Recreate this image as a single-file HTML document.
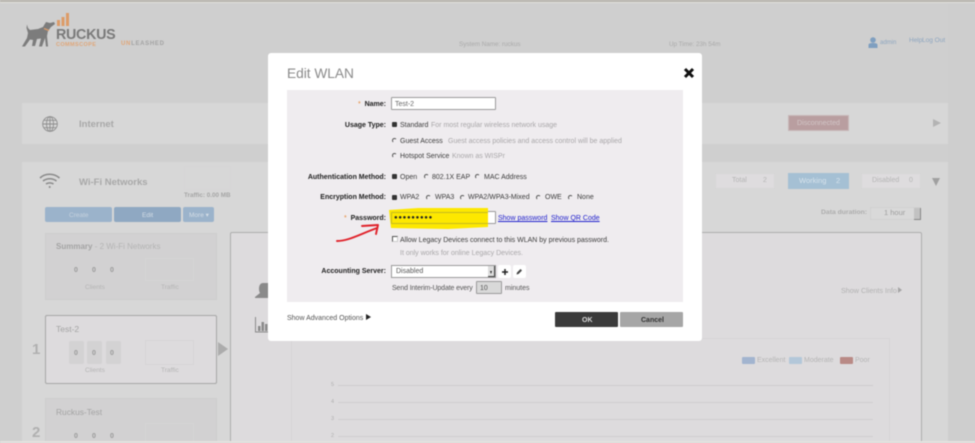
<!DOCTYPE html>
<html><head><meta charset="utf-8"><style>
html,body{margin:0;padding:0;width:975px;height:443px;overflow:hidden;background:#cfcfcf}
body{position:relative;font-family:"Liberation Sans",sans-serif;font-size:7px;color:#333}
#w{position:absolute;left:0;top:0;width:975px;height:443px;overflow:hidden;filter:blur(.45px)}
.a{position:absolute}
.t{position:absolute;white-space:nowrap;line-height:10px}
.m{color:#3c3c3c;font-size:7px}
.b{font-weight:bold;color:#222;font-size:7px;text-align:right;width:120px;left:266px}
.g{color:#a9a7a9;font-size:7px}
.l{color:#aaa;font-size:7px}
.r{position:absolute;width:5px;height:5px;border-radius:50%;border:1px solid transparent;border-left-color:#555;border-top-color:#555;box-sizing:border-box}
.r.on{background:#333;border:0;border-radius:1px;width:5px;height:5px}
.card{position:absolute;left:45px;width:172px;box-sizing:border-box;background:#d2d1d2;border:1px solid #cdcdcd}
.n{position:absolute;font-size:7px;font-weight:bold;color:#9a9a9a;line-height:10px}
.box{position:absolute;border:1px solid #d6d5d6;box-sizing:border-box}
.s{position:absolute;height:16px;background:#dedcde;border:1px solid #d6d6d6;box-sizing:border-box}
</style></head><body><div id="w">
<div class="a" style="left:0;top:0;width:975px;height:2px;background:#b8b5ae"></div>
<div class="a" style="left:0;top:2px;width:975px;height:1px;background:#e2e1de"></div>

<!-- Header -->
<svg class="a" style="left:20px;top:12px" width="145" height="40" viewBox="20 12 145 40">
<path d="M22 46.500 L25 46.500 L30 39.500 L33 40 L32 46 L35 46 L37 39 L41 38.500 L39 46.500 L42 46.500 L45 38 L46 46.500 L48 46.500 L47 36 L48 31 L51 27 L55 24 L54 22 L50 23 L46 22 L43 27 L38 29 L30 30 L28 28 L27 24.500 L26.500 28 L28 33 L27 38 Z" fill="#7c7c7c"/>
<path d="M44 28.500 L49 30.500" stroke="#d89b6c" stroke-width="1.400"/>
<rect x="57" y="20" width="3" height="6" fill="#dd9c68"/>
<rect x="61.500" y="17" width="3" height="9" fill="#dd9c68"/>
<rect x="66" y="13" width="3" height="13" fill="#dd9c68"/>
</svg>
<div class="t" style="left:56px;top:28px;font-size:14.300px;font-weight:bold;color:#7a7a7a;line-height:15px;letter-spacing:-.3px">RUCKUS</div>
<div class="t" style="left:56px;top:41px;font-size:5.500px;font-weight:bold;color:#e0a678;line-height:8px;letter-spacing:.4px">COMMSCOPE</div>
<div class="t" style="left:121px;top:40px;font-size:6px;font-weight:bold;color:#a3a3a3;line-height:9px;letter-spacing:.7px"><span style="color:#e0a678">UN</span>LEASHED</div>
<div class="t l" style="left:459px;top:40px;font-size:6.300px;color:#aaa">System Name: ruckus</div>
<div class="t l" style="left:669px;top:40px;font-size:6.300px;color:#aaa">Up Time: 23h 54m</div>
<svg class="a" style="left:868px;top:37px" width="10" height="11" viewBox="0 0 10 11"><circle cx="5" cy="3" r="2.800" fill="#7f9fc0"/><path d="M0.500 11 V8 C.5 6.500 2 6 5 6 C8 6 9.500 6.500 9.500 8 V11Z" fill="#7f9fc0"/></svg>
<div class="t" style="left:880px;top:38px;font-size:6px;color:#8ea6c0">admin</div>
<div class="t" style="left:909px;top:36px;font-size:6.500px;color:#8ea6c0">Help</div>
<div class="t" style="left:922px;top:36px;font-size:6.500px;color:#8ea6c0">Log Out</div>

<!-- side column -->
<div class="a" style="left:948px;top:3px;width:27px;height:440px;background:#cecece"></div>

<!-- Internet panel -->
<div class="a" style="left:22px;top:103px;width:926px;height:41px;background:#d7d7d7"></div>
<svg class="a" style="left:42px;top:116px" width="16" height="16" viewBox="0 0 16 16" fill="none" stroke="#8d8d8d" stroke-width=".9"><circle cx="8" cy="8" r="7.300"/><ellipse cx="8" cy="8" rx="3.500" ry="7.300"/><path d="M8 .7V15.300M.7 8H15.300M1.800 4.300H14.200M1.800 11.700H14.200"/></svg>
<div class="t" style="left:79px;top:120px;font-size:9.500px;font-weight:bold;color:#a8a8a8">Internet</div>
<div class="a" style="left:788px;top:115px;width:61px;height:16px;background:#b99ea0;border:1px solid #c8b8b9;box-sizing:border-box"></div>
<div class="t" style="left:797px;top:118px;font-size:7.100px;color:#d2c6c7">Disconnected</div>
<div class="a" style="left:933px;top:119px;width:0;height:0;border-left:8px solid #b3b3b3;border-top:4px solid transparent;border-bottom:4px solid transparent"></div>

<!-- WiFi panel -->
<div class="a" style="left:22px;top:162px;width:926px;height:281px;background:#d7d7d7"></div>
<svg class="a" style="left:39px;top:172px" width="22" height="17" viewBox="0 0 22 17" fill="none" stroke="#8a8a8a" stroke-width="1.600"><path d="M1 6 C6 1 15 1 20.500 6"/><path d="M4 9 C8 6 13.500 6 17.500 9"/><path d="M7 12 C9 10.500 12.500 10.500 14.500 12"/><circle cx="10.700" cy="15" r="1" fill="#8a8a8a" stroke="none"/></svg>
<div class="t" style="left:79px;top:178px;font-size:9.500px;font-weight:bold;color:#a8a8a8">Wi-Fi Networks</div>
<div class="box" style="left:184px;top:166px;width:47px;height:24px"></div>
<div class="t" style="left:184px;top:191px;font-size:6.300px;font-weight:bold;color:#a6a6a6">Traffic: 0.00 MB</div>
<div class="a" style="left:45px;top:207px;width:67px;height:15px;background:#9bb3cb;border-radius:2px"></div>
<div class="a" style="left:114px;top:207px;width:67px;height:15px;background:#8fa8c2;border-radius:2px"></div>
<div class="a" style="left:183px;top:207px;width:31px;height:15px;background:#9bb3cb;border-radius:2px"></div>
<div class="t" style="left:69px;top:211px;font-size:6.500px;color:#c6d2de">Create</div>
<div class="t" style="left:142px;top:211px;font-size:6.500px;color:#d4dde6">Edit</div>
<div class="t" style="left:189px;top:211px;font-size:6.500px;color:#d4dde6">More ▾</div>

<div class="s" style="left:715px;top:173px;width:60px"></div>
<div class="t" style="left:732px;top:176px;color:#b5b5b5;font-size:7px">Total</div>
<div class="t" style="left:763px;top:176px;color:#b5b5b5;font-size:7px">2</div>
<div class="a" style="left:788px;top:173px;width:61px;height:16px;background:#a5c0d4"></div>
<div class="t" style="left:799px;top:176px;color:#d7e3ec;font-size:7.500px">Working</div>
<div class="t" style="left:836px;top:176px;color:#d7e3ec;font-size:7.500px">2</div>
<div class="s" style="left:861px;top:173px;width:60px"></div>
<div class="t" style="left:872px;top:176px;color:#b5b5b5;font-size:7px">Disabled</div>
<div class="t" style="left:909px;top:176px;color:#b5b5b5;font-size:7px">0</div>
<div class="a" style="left:932px;top:178px;width:0;height:0;border-top:8px solid #a0a0a0;border-left:4.500px solid transparent;border-right:4.500px solid transparent"></div>
<div class="t" style="left:821px;top:208px;font-size:6.800px;font-weight:bold;color:#adadad">Data duration:</div>
<div class="a" style="left:870px;top:207px;width:51px;height:13px;border:1px solid #d0d0d0;box-sizing:border-box;background:#d9d9d9"></div>
<div class="t" style="left:884px;top:207px;font-size:7.500px;color:#9e9e9e;line-height:12px">1 hour</div>
<div class="a" style="left:914px;top:208px;width:7px;height:12px;background:#c2c2c2;border-right:1px solid #888;border-bottom:1px solid #888;box-sizing:border-box"></div>

<!-- cards -->
<div class="card" style="top:233px;height:67px"></div>
<div class="t" style="left:56px;top:242px;font-size:8px;color:#b4b4b4"><b style="color:#a4a4a4">Summary</b> - 2 Wi-Fi Networks</div>
<div class="n" style="left:74px;top:266px">0</div><div class="n" style="left:92px;top:266px">0</div><div class="n" style="left:110px;top:266px">0</div>
<div class="box" style="left:145px;top:258px;width:49px;height:23px"></div>
<div class="t" style="left:85px;top:283px;font-size:6.500px;color:#b5b5b5">Clients</div>
<div class="t" style="left:161px;top:283px;font-size:6.500px;color:#b5b5b5">Traffic</div>

<div class="a" style="left:45px;top:315px;width:172px;height:69px;box-sizing:border-box;background:#dddbdd;border:1px solid #a6a6a6;border-radius:2px"></div>
<div class="t" style="left:56px;top:324px;font-size:8.500px;color:#a4a4a4">Test-2</div>
<div class="a" style="left:69px;top:341px;width:15px;height:23px;background:#d3d2d3;border-radius:2px"></div>
<div class="a" style="left:87px;top:341px;width:15px;height:23px;background:#d3d2d3;border-radius:2px"></div>
<div class="a" style="left:106px;top:341px;width:15px;height:23px;background:#d3d2d3;border-radius:2px"></div>
<div class="n" style="left:74px;top:349px">0</div><div class="n" style="left:92px;top:349px">0</div><div class="n" style="left:110px;top:349px">0</div>
<div class="box" style="left:145px;top:340px;width:49px;height:25px"></div>
<div class="t" style="left:85px;top:366px;font-size:6.500px;color:#b5b5b5">Clients</div>
<div class="t" style="left:161px;top:366px;font-size:6.500px;color:#b5b5b5">Traffic</div>
<div class="t" style="left:32px;top:342px;font-size:15px;font-weight:bold;color:#b0b0b0;line-height:15px">1</div>
<div class="a" style="left:218px;top:342px;width:0;height:0;border-left:10px solid #acacac;border-top:7.500px solid transparent;border-bottom:7.500px solid transparent"></div>

<div class="card" style="top:398px;height:60px"></div>
<div class="t" style="left:56px;top:407px;font-size:8.400px;color:#a4a4a4">Ruckus-Test</div>
<div class="n" style="left:74px;top:432px">0</div><div class="n" style="left:92px;top:432px">0</div><div class="n" style="left:110px;top:432px">0</div>
<div class="box" style="left:145px;top:423px;width:49px;height:30px"></div>
<div class="t" style="left:32px;top:425px;font-size:15px;font-weight:bold;color:#b0b0b0;line-height:15px">2</div>

<!-- Right detail panel -->
<div class="a" style="left:230px;top:232px;width:692px;height:220px;box-sizing:border-box;background:#dddbdd;border:1.500px solid #aeaeae;border-radius:2px"></div>
<svg class="a" style="left:254px;top:280px" width="20" height="55" viewBox="0 0 20 55"><path d="M1 17 L6 13 C4 9 5 3 9 3 H14 V18 H1Z" fill="#8a8a8a"/><path d="M1.500 37 V52 H14" stroke="#8a8a8a" fill="none"/><rect x="4" y="46" width="2.500" height="5" fill="#8a8a8a"/><rect x="7.500" y="42" width="2.500" height="9" fill="#8a8a8a"/><rect x="11" y="44" width="2.500" height="7" fill="#8a8a8a"/></svg>
<div class="t" style="left:841px;top:286px;font-size:7.200px;color:#b2b2b2">Show Clients Info</div>
<div class="a" style="left:898px;top:287px;width:0;height:0;border-left:4px solid #a5a5a5;border-top:3.500px solid transparent;border-bottom:3.500px solid transparent"></div>
<div class="a" style="left:291px;top:338px;width:599px;height:110px;box-sizing:border-box;border:1px solid #d7d5d7"></div>
<div class="a" style="left:742px;top:357px;width:13px;height:7px;background:#a2b4cf;border-radius:1px"></div>
<div class="t" style="left:757px;top:356px;font-size:7px;color:#b5b5b5">Excellent</div>
<div class="a" style="left:789px;top:357px;width:13px;height:7px;background:#b3c7d9;border-radius:1px"></div>
<div class="t" style="left:804px;top:356px;font-size:7px;color:#b5b5b5">Moderate</div>
<div class="a" style="left:840px;top:357px;width:13px;height:7px;background:#b98a86;border-radius:1px"></div>
<div class="t" style="left:855px;top:356px;font-size:7px;color:#b5b5b5">Poor</div>
<div class="a" style="left:338px;top:385px;width:535px;height:1px;background:#cdcbcd"></div>
<div class="a" style="left:338px;top:402px;width:535px;height:1px;background:#d0ced0"></div>
<div class="a" style="left:338px;top:419px;width:535px;height:1px;background:#d0ced0"></div>
<div class="a" style="left:338px;top:436px;width:535px;height:1px;background:#d0ced0"></div>
<div class="t" style="left:331px;top:380px;font-size:5.500px;color:#b0b0b0">5</div>
<div class="t" style="left:331px;top:397px;font-size:5.500px;color:#b0b0b0">4</div>
<div class="t" style="left:331px;top:414px;font-size:5.500px;color:#b0b0b0">3</div>
<div class="t" style="left:331px;top:431px;font-size:5.500px;color:#b0b0b0">2</div>

<div class="a" style="left:0;top:441px;width:975px;height:2px;background:#e4e3df"></div>

<!-- Modal -->
<div class="a" style="left:268px;top:53px;width:434px;height:288px;background:#fff;border-radius:3px"></div>
<div class="t" style="left:287px;top:66px;font-size:13.700px;color:#8a8a8a;line-height:16px">Edit WLAN</div>
<svg class="a" style="left:683px;top:67px" width="12" height="12" viewBox="0 0 12 12"><path d="M2 2 L10 10 M10 2 L2 10" stroke="#111" stroke-width="3"/></svg>
<div class="a" style="left:287px;top:90px;width:396px;height:212px;background:#efecef"></div>

<div class="t" style="left:358px;top:100px;font-size:7px;color:#e58a3c">*</div>
<div class="t b" style="top:100px">Name:</div>
<div class="a" style="left:391px;top:97px;width:105px;height:13px;background:#fff;border:1px solid #9a9a9a;box-sizing:border-box;border-radius:1px"></div>
<div class="t" style="left:395px;top:100px;font-size:7px;color:#666">Test-2</div>

<div class="t b" style="top:121px">Usage Type:</div>
<div class="r on" style="left:392px;top:122px"></div>
<div class="t m" style="left:400px;top:121px">Standard</div>
<div class="t g" style="left:431px;top:121px">For most regular wireless network usage</div>
<div class="r" style="left:392px;top:138px"></div>
<div class="t m" style="left:400px;top:137px">Guest Access</div>
<div class="t g" style="left:448px;top:137px">Guest access policies and access control will be applied</div>
<div class="r" style="left:392px;top:153px"></div>
<div class="t m" style="left:400px;top:152px">Hotspot Service</div>
<div class="t g" style="left:452px;top:152px">Known as WISPr</div>

<div class="t b" style="top:173px">Authentication Method:</div>
<div class="r on" style="left:392px;top:174px"></div>
<div class="t m" style="left:400px;top:173px">Open</div>
<div class="r" style="left:424px;top:174px"></div>
<div class="t m" style="left:432px;top:173px">802.1X EAP</div>
<div class="r" style="left:475px;top:174px"></div>
<div class="t m" style="left:484px;top:173px">MAC Address</div>

<div class="t b" style="top:193px">Encryption Method:</div>
<div class="r on" style="left:392px;top:195px"></div>
<div class="t m" style="left:400px;top:193px">WPA2</div>
<div class="r" style="left:426px;top:195px"></div>
<div class="t m" style="left:435px;top:193px">WPA3</div>
<div class="r" style="left:460px;top:195px"></div>
<div class="t m" style="left:468px;top:193px">WPA2/WPA3-Mixed</div>
<div class="r" style="left:536px;top:195px"></div>
<div class="t m" style="left:545px;top:193px">OWE</div>
<div class="r" style="left:568px;top:195px"></div>
<div class="t m" style="left:577px;top:193px">None</div>

<div class="t" style="left:344px;top:214px;font-size:7px;color:#e58a3c">*</div>
<div class="t b" style="top:214px">Password:</div>
<div class="a" style="left:391px;top:211px;width:105px;height:13px;background:#fff;border:1px solid #9a9a9a;box-sizing:border-box;border-radius:1px"></div>
<svg class="a" style="left:388px;top:207px" width="101" height="23" viewBox="0 0 101 23"><path d="M1 3 L30 1 L100 1 L100 20 L60 22 L3 21 Z" fill="#fde800"/></svg>
<div class="a" style="left:391px;top:212px;width:97px;height:12px;box-sizing:border-box;border:1px solid #c4ba20;border-right:0;border-radius:1px"></div>
<div class="t" style="left:394px;top:213px;font-size:6px;font-weight:bold;color:#222;letter-spacing:.7px;line-height:10px">●●●●●●●●●</div>
<div class="t" style="left:498px;top:214px;font-size:7px;color:#2222cc;text-decoration:underline">Show password</div>
<div class="t" style="left:551px;top:214px;font-size:7px;color:#2222cc;text-decoration:underline">Show QR Code</div>

<svg class="a" style="left:334px;top:222px" width="48" height="24" viewBox="0 0 48 24" fill="none" stroke="#e0222a" stroke-width="1.900" stroke-linecap="round" stroke-linejoin="round"><path d="M3 19 C14 19 24 13 43 6"/><path d="M28 4 L44 3 L42 12"/></svg>

<div class="a" style="left:392px;top:236px;width:6px;height:6px;border:1px solid;border-color:#555 #ccc #ccc #555;box-sizing:border-box;background:#fff"></div>
<div class="t m" style="left:400px;top:236px">Allow Legacy Devices connect to this WLAN by previous password.</div>
<div class="t g" style="left:400px;top:249px">It only works for online Legacy Devices.</div>

<div class="t b" style="top:267px">Accounting Server:</div>
<div class="a" style="left:391px;top:265px;width:105px;height:13px;background:#fff;border:1px solid #9a9a9a;box-sizing:border-box"></div>
<div class="t" style="left:396px;top:267px;font-size:7px;color:#555">Disabled</div>
<div class="a" style="left:488px;top:266px;width:7px;height:11px;background:#ddd;border-right:1px solid #444;border-bottom:1px solid #444;box-sizing:border-box"></div>
<div class="a" style="left:490px;top:271px;width:0;height:0;border-top:3px solid #222;border-left:1.500px solid transparent;border-right:1.500px solid transparent"></div>
<div class="a" style="left:498px;top:265px;width:13px;height:13px;background:#fff;border-radius:2px"></div>
<svg class="a" style="left:501px;top:268px" width="8" height="8" viewBox="0 0 8 8"><path d="M4 1V7M1 4H7" stroke="#222" stroke-width="1.500"/></svg>
<div class="a" style="left:513px;top:265px;width:13px;height:13px;background:#fff;border-radius:2px"></div>
<svg class="a" style="left:516px;top:268px" width="7" height="7" viewBox="0 0 7 7"><path d="M0.500 6.500 L1 4.500 L4.500 1 L6 2.500 L2.500 6Z" fill="#444"/></svg>
<div class="t m" style="left:392px;top:284px;color:#555;letter-spacing:-.12px">Send Interim-Update every</div>
<div class="a" style="left:476px;top:281px;width:26px;height:13px;background:#d9d9d9;border:1px solid #9a9a9a;box-sizing:border-box;border-radius:1px"></div>
<div class="t" style="left:480px;top:284px;font-size:7px;color:#555">10</div>
<div class="t m" style="left:505px;top:284px;color:#555">minutes</div>

<div class="t" style="left:287px;top:314px;font-size:7px;color:#555">Show Advanced Options</div>
<div class="a" style="left:366px;top:314px;width:0;height:0;border-left:5px solid #222;border-top:3px solid transparent;border-bottom:3px solid transparent"></div>
<div class="a" style="left:555px;top:312px;width:63px;height:15px;background:#3b3b3b;border-radius:1px"></div>
<div class="t" style="left:582px;top:316px;font-size:7px;font-weight:bold;color:#ddd">OK</div>
<div class="a" style="left:620px;top:312px;width:63px;height:15px;background:#a6a6a6;border-radius:1px"></div>
<div class="t" style="left:641px;top:316px;font-size:7px;font-weight:bold;color:#333">Cancel</div>
</div></body></html>
